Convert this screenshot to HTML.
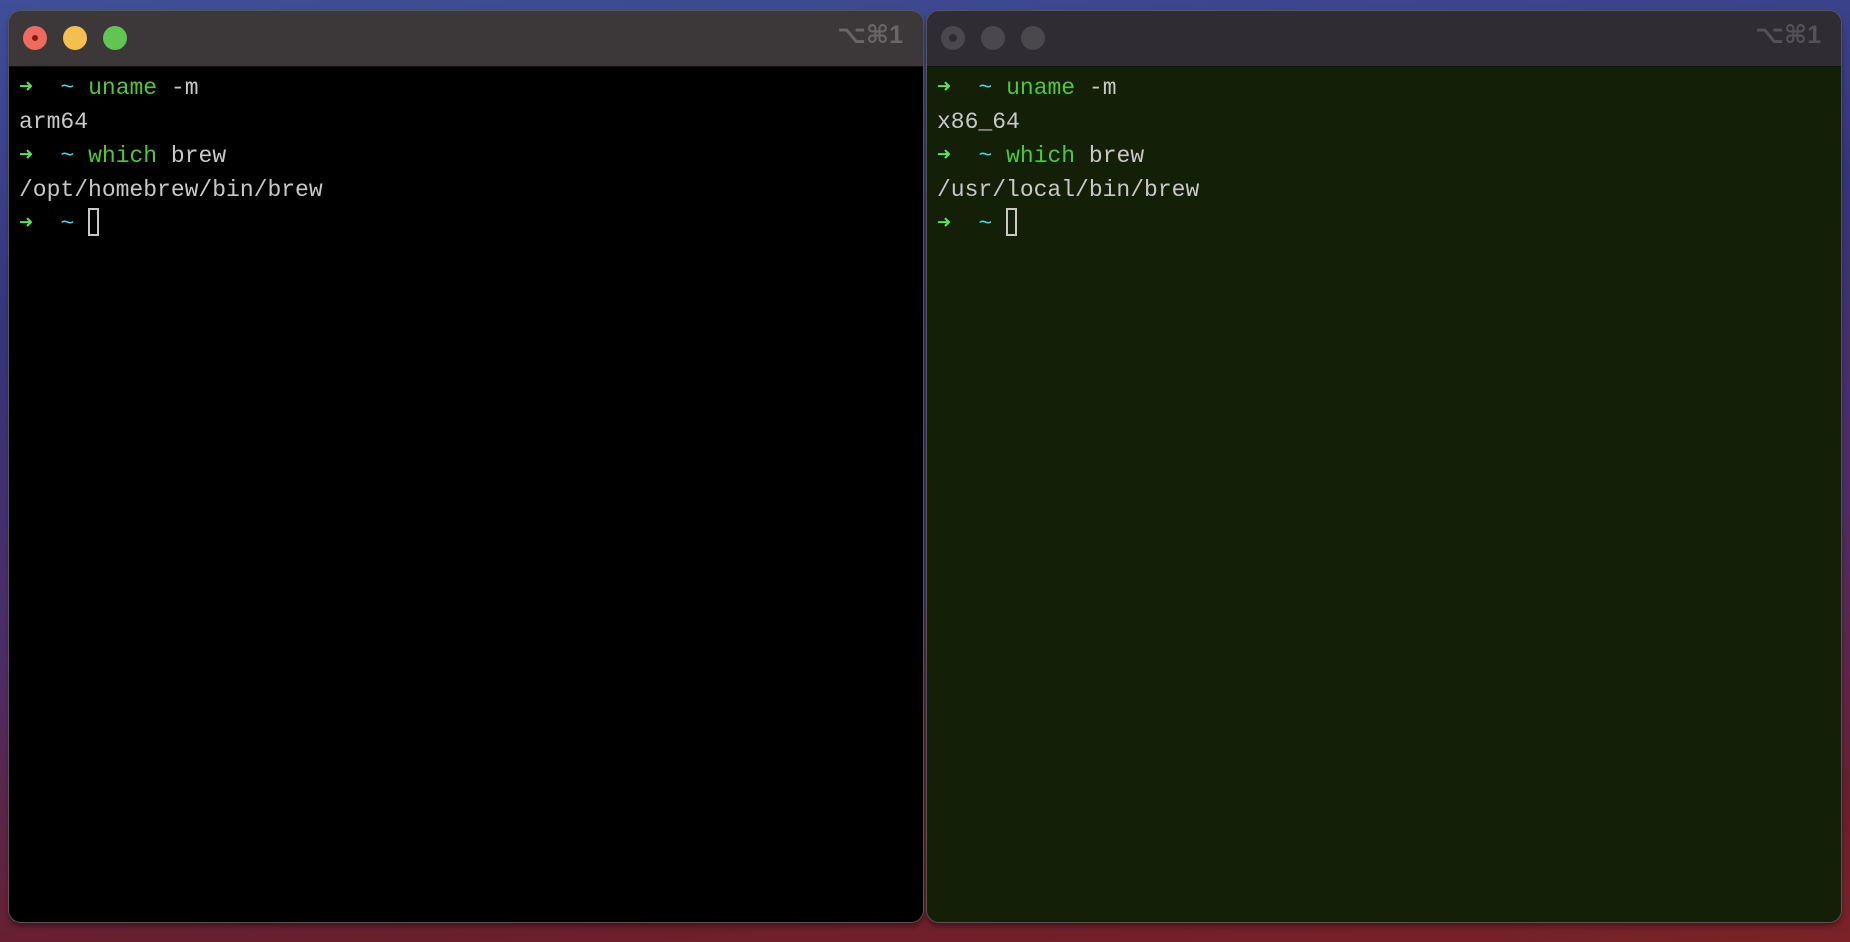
<!DOCTYPE html>
<html><head><meta charset="utf-8"><style>
html,body{margin:0;padding:0;width:1850px;height:942px;overflow:hidden;}
body{background:linear-gradient(175deg,#3f4f98 0%,#36357a 30%,#4e2c66 60%,#6a1f2c 88%,#7a2228 100%);position:relative;font-family:"Liberation Mono","DejaVu Sans Mono",monospace;}
.win{position:absolute;top:11px;width:914px;height:911px;border-radius:12px;overflow:hidden;box-shadow:0 0 0 1px #555,0 4px 6px rgba(0,0,0,.4);}
.tb{height:55px;background:#3c3839;border-bottom:1px solid #111;position:relative;}
.w2 .tb{background:#2f2d33;}
.dot{position:absolute;top:15px;width:24px;height:24px;border-radius:50%;}
.sc{position:absolute;top:9px;right:20px;font-family:"Liberation Sans","DejaVu Sans",sans-serif;font-weight:bold;font-size:25px;color:#6a6668;}
.w2 .sc{color:#545257;}
.body{position:absolute;top:56px;left:0;right:0;bottom:0;background:#000;padding:4px 0 0 10px;font-size:23px;line-height:34px;color:#c8c8c8;}
.w2 .body{background:#131f07;}
.a{color:#5ee05a;font-weight:bold}.t{color:#4fd6e0}.g{color:#4fc832}
.cur{display:inline-block;width:11px;height:28px;border:2px solid #c8c8c8;vertical-align:-6px;box-sizing:border-box;}
.line{white-space:pre;}
</style></head><body>
<div class="win w1" style="left:9px">
 <div class="tb">
  <div class="dot" style="left:14px;background:#ec6a5e"><div style="position:absolute;left:9px;top:9px;width:6px;height:6px;border-radius:50%;background:#8a1a10"></div></div>
  <div class="dot" style="left:54px;background:#f4bf4f"></div>
  <div class="dot" style="left:94px;background:#61c554"></div>
  <div class="sc">⌥⌘1</div>
 </div>
 <div class="body">
<div class="line"><span class="a">➜</span>  <span class="t">~</span> <span class="g">uname</span> -m</div>
<div class="line">arm64</div>
<div class="line"><span class="a">➜</span>  <span class="t">~</span> <span class="g">which</span> brew</div>
<div class="line">/opt/homebrew/bin/brew</div>
<div class="line"><span class="a">➜</span>  <span class="t">~</span> <span class="cur"></span></div>
 </div>
</div>
<div class="win w2" style="left:927px">
 <div class="tb">
  <div class="dot" style="left:14px;background:#4a484d"><div style="position:absolute;left:8px;top:8px;width:8px;height:8px;border-radius:50%;background:#2f2d33"></div></div>
  <div class="dot" style="left:54px;background:#4a484d"></div>
  <div class="dot" style="left:94px;background:#4a484d"></div>
  <div class="sc">⌥⌘1</div>
 </div>
 <div class="body">
<div class="line"><span class="a">➜</span>  <span class="t">~</span> <span class="g">uname</span> -m</div>
<div class="line">x86_64</div>
<div class="line"><span class="a">➜</span>  <span class="t">~</span> <span class="g">which</span> brew</div>
<div class="line">/usr/local/bin/brew</div>
<div class="line"><span class="a">➜</span>  <span class="t">~</span> <span class="cur"></span></div>
 </div>
</div>
</body></html>
